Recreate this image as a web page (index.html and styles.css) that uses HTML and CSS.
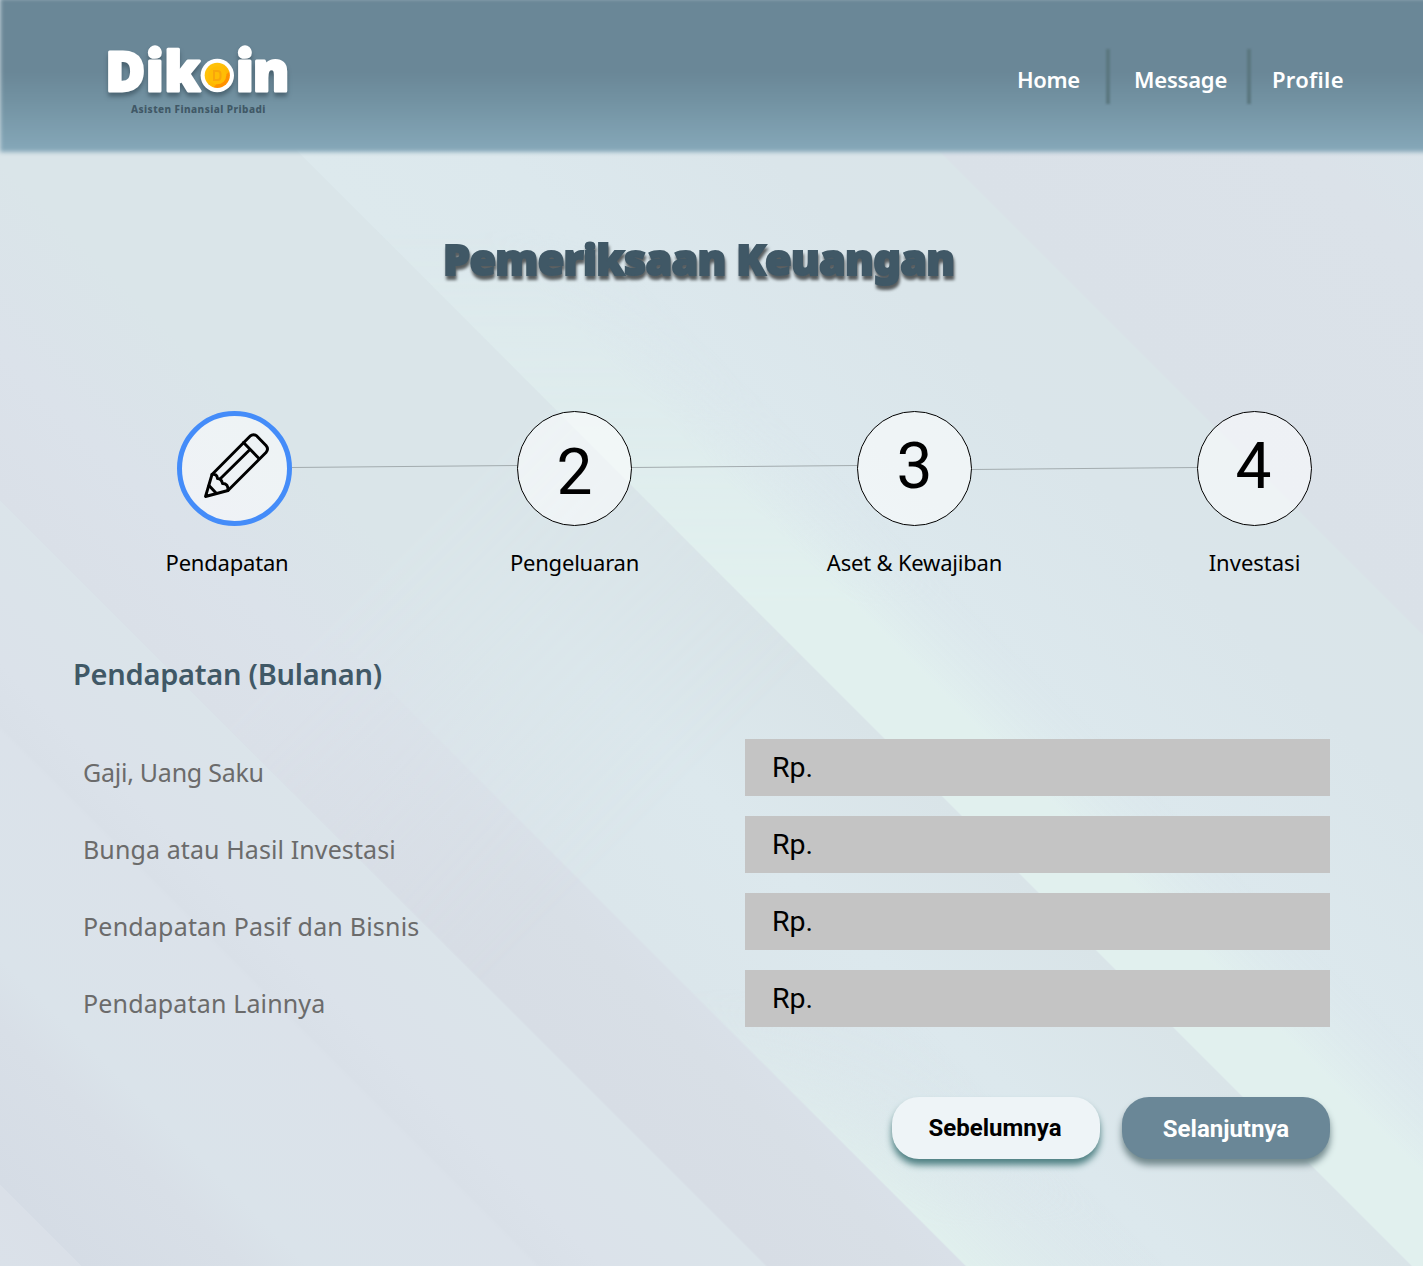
FILE: index.html
```html
<!DOCTYPE html>
<html lang="id">
<head>
<meta charset="utf-8">
<title>Dikoin - Pemeriksaan Keuangan</title>
<link rel="stylesheet" href="styles.css">
</head>
<body>
<svg class="backdrop" viewBox="0 0 1423 1266" preserveAspectRatio="none" aria-hidden="true">
  <defs>
    <linearGradient id="bands" gradientUnits="userSpaceOnUse" x1="0" y1="1266" x2="1344.5" y2="-78.5">
      <stop offset="0" stop-color="#dae1e9"/>
      <stop offset=".0301" stop-color="#dae0e8"/>
      <stop offset=".0303" stop-color="#d5dce5"/>
      <stop offset=".09" stop-color="#d8dfe7"/>
      <stop offset=".115" stop-color="#dae3ea"/>
      <stop offset=".199" stop-color="#dbe2ea"/>
      <stop offset=".201" stop-color="#d9e0e8"/>
      <stop offset=".225" stop-color="#dbe2ea"/>
      <stop offset=".2845" stop-color="#dbe4ea"/>
      <stop offset=".2855" stop-color="#d7dde5"/>
      <stop offset=".34" stop-color="#d8dfe6"/>
      <stop offset=".3585" stop-color="#d9e0e8"/>
      <stop offset=".3595" stop-color="#dbe6eb"/>
      <stop offset=".44" stop-color="#dce8ed"/>
      <stop offset=".5246" stop-color="#d9e4e8"/>
      <stop offset=".5256" stop-color="#dde9ed"/>
      <stop offset=".6" stop-color="#dce8ed"/>
      <stop offset=".7" stop-color="#dae5ea"/>
      <stop offset=".7634" stop-color="#dae5e9"/>
      <stop offset=".7644" stop-color="#dae1e8"/>
      <stop offset=".9" stop-color="#dbe2e9"/>
      <stop offset=".95" stop-color="#dae4ea"/>
      <stop offset="1" stop-color="#dae5ea"/>
    </linearGradient>
    <linearGradient id="mint" gradientUnits="userSpaceOnUse" x1="146" y1="0" x2="256" y2="-110">
      <stop offset="0" stop-color="#e1f0ee"/>
      <stop offset=".45" stop-color="#e1f0ee"/>
      <stop offset="1" stop-color="#dde9ee" stop-opacity="0"/>
    </linearGradient>
    <linearGradient id="mintLow" gradientUnits="userSpaceOnUse" x1="-300" y1="0" x2="-200" y2="-100">
      <stop offset="0" stop-color="#e0efed"/>
      <stop offset="1" stop-color="#dde9ee" stop-opacity="0"/>
    </linearGradient>
    <linearGradient id="fadeA" x1="0" y1="0" x2="0" y2="1">
      <stop offset=".18" stop-color="#000"/>
      <stop offset=".48" stop-color="#fff"/>
    </linearGradient>
    <linearGradient id="fadeB" x1="0" y1="0" x2="0" y2="1">
      <stop offset=".78" stop-color="#000"/>
      <stop offset=".97" stop-color="#fff"/>
    </linearGradient>
    <linearGradient id="haze" gradientUnits="userSpaceOnUse" x1="0" y1="500" x2="170" y2="330">
      <stop offset="0" stop-color="#dae0e8"/>
      <stop offset=".45" stop-color="#dbe2ea"/>
      <stop offset="1" stop-color="#dae5e9"/>
    </linearGradient>
    <linearGradient id="hazeFade" gradientUnits="userSpaceOnUse" x1="300" y1="650" x2="560" y2="910">
      <stop offset="0" stop-color="#fff"/>
      <stop offset="1" stop-color="#000"/>
    </linearGradient>
    <mask id="maskA"><rect width="1423" height="1266" fill="url(#fadeA)"/></mask>
    <mask id="maskB"><rect width="1423" height="1266" fill="url(#fadeB)"/></mask>
    <mask id="maskC"><rect width="1423" height="1266" fill="url(#hazeFade)"/></mask>
  </defs>
  <rect width="1423" height="1266" fill="url(#bands)"/>
  <path d="M0 500V0H146L1412 1266H766Z" fill="url(#haze)" mask="url(#maskC)"/>
  <path d="M146 0H400L1423 1023V1266H1412Z" fill="url(#mint)" mask="url(#maskA)"/>
  <path d="M600 900H800L1166 1266H966Z" fill="url(#mintLow)" mask="url(#maskB)"/>
</svg>

<header class="topbar">
  <a class="brand">
    <svg width="200" height="80" viewBox="0 0 200 80" role="img" aria-label="Dikoin">
      <defs>
        <linearGradient id="coin" x1="0" y1="0" x2="1" y2="1">
          <stop offset=".3" stop-color="#ffc20a"/>
          <stop offset=".66" stop-color="#ffb400"/>
          <stop offset=".67" stop-color="#ff9100"/>
        </linearGradient>
      </defs>
      <g class="wordmark">
        <text class="wordmark-text" y="50.500"><tspan x="5.500">D</tspan><tspan x="46">i</tspan><tspan x="64.500">k</tspan><tspan x="136">i</tspan><tspan x="153">n</tspan></text>
        <circle cx="55" cy="11.500" r="6.200"/>
        <circle cx="145" cy="11.500" r="6.200"/>
        <circle cx="117.300" cy="35.500" r="16.700"/>
      </g>
      <circle cx="117.300" cy="35.300" r="12.600" fill="url(#coin)"/>
      <circle cx="117.300" cy="35.300" r="9" fill="#ffbd05"/>
      <path d="M114 31h3.500a3 3 0 0 1 3 3v3a3 3 0 0 1-3 3H114Z" fill="none" stroke="#f9a60a" stroke-width="2"/>
    </svg>
    <span class="tagline">Asisten Finansial Pribadi</span>
  </a>
  <nav class="menu">
    <a class="menu-home">Home</a>
    <span class="menu-rule"></span>
    <a class="menu-message">Message</a>
    <span class="menu-rule"></span>
    <a class="menu-profile">Profile</a>
  </nav>
</header>

<main>
  <h1 class="title">Pemeriksaan Keuangan</h1>

  <div class="steps">
    <div class="step step-income">
      <div class="badge badge-active">
        <svg width="67" height="67" viewBox="0 0 67 67" fill="none" stroke="#000" stroke-width="2.9" stroke-linejoin="round" stroke-linecap="round">
          <path d="M2.500 64.500 9 42.500 47 4.200q3.500-3 7 0l9 9.300q3 3.500 0 7L25 58.500Z"/>
          <path d="M40.500 10.500 56 26.500M47 17.500 17.500 46.500"/>
          <path d="M9 42.500q5-1 5.500 4 4 0 5 5 6 0 5.500 7M6 53.500l7 7.500"/>
        </svg>
      </div>
      <span class="step-label">Pendapatan</span>
    </div>
    <svg class="link" width="225" height="6"><path d="M0 3.500 225 1.500"/></svg>
    <div class="step step-expense">
      <div class="badge badge-low">2</div>
      <span class="step-label">Pengeluaran</span>
    </div>
    <svg class="link" width="225" height="6"><path d="M0 3.500 225 1.500"/></svg>
    <div class="step step-assets">
      <div class="badge">3</div>
      <span class="step-label">Aset &amp; Kewajiban</span>
    </div>
    <svg class="link" width="225" height="6"><path d="M0 5.500 225 3.500"/></svg>
    <div class="step step-invest">
      <div class="badge badge-last">4</div>
      <span class="step-label">Investasi</span>
    </div>
  </div>

  <h2 class="section">Pendapatan (Bulanan)</h2>

  <form class="fields">
    <div class="field"><label class="name name-salary">Gaji, Uang Saku</label><div class="amount">Rp.</div></div>
    <div class="field"><label class="name name-interest">Bunga atau Hasil Investasi</label><div class="amount">Rp.</div></div>
    <div class="field"><label class="name name-passive">Pendapatan Pasif dan Bisnis</label><div class="amount">Rp.</div></div>
    <div class="field"><label class="name name-other">Pendapatan Lainnya</label><div class="amount">Rp.</div></div>
  </form>

  <div class="actions">
    <button class="btn btn-back" type="button">Sebelumnya</button>
    <button class="btn btn-next" type="button">Selanjutnya</button>
  </div>
</main>
</body>
</html>
```
FILE: styles.css
```css
* { box-sizing: border-box; }

body {
  margin: 0;
  width: 1423px;
  height: 1266px;
  position: relative;
  overflow: hidden;
  font-family: "Noto Sans", sans-serif;
  color: #000;
}

.backdrop {
  position: absolute;
  inset: 0;
  width: 1423px;
  height: 1266px;
  z-index: -2;
}

.topbar {
  position: relative;
  height: 152px;
  display: flex;
  justify-content: space-between;
  padding: 40px 79px 0 100px;
}

.topbar::before {
  content: "";
  position: absolute;
  inset: -2px -6px 0 0;
  z-index: -1;
  background: linear-gradient(#6a8797 0, #6a8797 48%, #7393a3 68%, #86a8b9 100%);
  filter: blur(2px);
}

.brand {
  width: 200px;
  display: flex;
  flex-direction: column;
}

.brand svg {
  overflow: visible;
  flex: none;
  width: 200px;
  height: 80px;
  margin-bottom: -18px;
}

.wordmark {
  fill: #fff;
  filter: drop-shadow(0 4px 2px rgba(40, 60, 72, .5));
}

.wordmark-text {
  font: 900 54px "Noto Sans", sans-serif;
  stroke: #fff;
  stroke-width: 3px;
  stroke-linejoin: round;
}

.tagline {
  margin-left: 31px;
  font-size: 10px;
  font-weight: 800;
  line-height: 14px;
  letter-spacing: .44px;
  color: #405866;
  white-space: nowrap;
}

.menu {
  display: flex;
  height: 77px;
  align-items: center;
  font-size: 22px;
  font-weight: 600;
  color: #fff;
}

.menu a { white-space: nowrap; }
.menu-home { width: 62px; letter-spacing: -.4px; }
.menu-message { width: 92px; letter-spacing: -.2px; }
.menu-profile { width: 72px; letter-spacing: .3px; }

.menu-rule {
  width: 4px;
  height: 55px;
  margin: -4px 24px 0 27px;
  background: #5b7780;
  filter: blur(1px);
}

.menu-message + .menu-rule { margin: -4px 21px 0 21px; }

.title {
  margin: 75px 0 0 443px;
  width: 520px;
  font-size: 43px;
  font-weight: 900;
  line-height: 64px;
  letter-spacing: -.7px;
  color: #405866;
  white-space: nowrap;
  -webkit-text-stroke: 2px #405866;
  paint-order: stroke fill;
  filter: drop-shadow(1px 4px 1.5px rgba(0, 0, 0, .6));
}

.steps {
  display: flex;
  align-items: flex-start;
  margin: 120px 0 0 177px;
  height: 170px;
}

.step {
  width: 115px;
  display: flex;
  flex-direction: column;
  align-items: center;
}

.badge {
  width: 115px;
  height: 115px;
  border: 1px solid #000;
  border-radius: 50%;
  background: rgba(255, 255, 255, .55);
  display: flex;
  align-items: center;
  justify-content: center;
  padding-bottom: 3px;
  font: 400 64px/1 Roboto, sans-serif;
}

.badge-low { padding: 9px 0 0; }
.badge-last { padding-right: 2px; }
.badge-active { border: 5px solid #448cf9; padding: 0 0 6px 4px; }
.badge-active svg { flex: none; }

.step-label {
  margin-top: 21px;
  font-size: 22px;
  line-height: 30px;
  letter-spacing: -.2px;
  white-space: nowrap;
}

.step-income .step-label { margin-left: -15px; }
.step-invest .step-label { letter-spacing: 0; }

.link {
  flex: none;
  margin-top: 53px;
  stroke: #a3acaf;
  stroke-width: 1;
}

.section {
  margin: 71px 0 0 73px;
  font-size: 29px;
  font-weight: 600;
  line-height: 44px;
  letter-spacing: -.25px;
  color: #405866;
  white-space: nowrap;
}

.fields {
  display: grid;
  gap: 20px;
  margin: 43px 93px 0 83px;
}

.field {
  display: flex;
  justify-content: space-between;
  height: 57px;
}

.name {
  padding-top: 14px;
  font-size: 25px;
  line-height: 38px;
  color: #6b6b6b;
  white-space: nowrap;
}

.name-salary { letter-spacing: -.25px; }
.name-interest { letter-spacing: .1px; }
.name-passive { letter-spacing: .2px; }
.name-other { letter-spacing: .15px; }

.amount {
  width: 585px;
  padding-left: 27px;
  background: #c4c4c4;
  font: 400 28.5px/57px Roboto, sans-serif;
}

.actions {
  display: flex;
  justify-content: flex-end;
  gap: 22px;
  margin: 70px 93px 0 0;
}

.btn {
  width: 208px;
  height: 62px;
  padding: 0;
  border: 0;
  border-radius: 27px;
  font: 700 24px/62px Roboto, sans-serif;
}

.btn-back {
  background: #eef4f7;
  color: #000;
  padding-right: 2px;
  box-shadow: 0 6px 7px #4f8083;
}

.btn-next {
  background: #6a8797;
  color: #fff;
  padding-top: 1px;
  box-shadow: 0 6px 7px #71888c;
}
```
